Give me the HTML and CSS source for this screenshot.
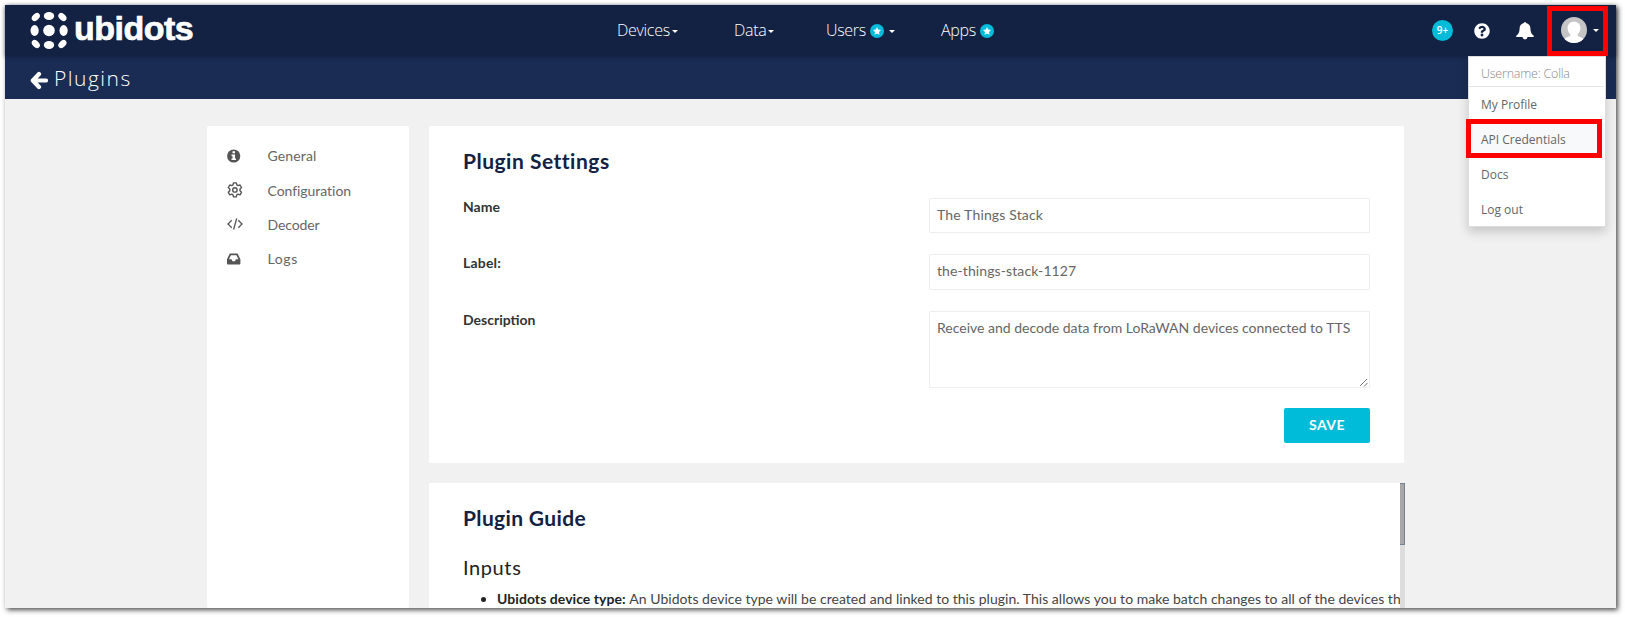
FILE: index.html
```html
<!DOCTYPE html>
<html lang="en">
<head>
<meta charset="utf-8">
<title>Plugins</title>
<link rel="stylesheet" href="styles.css">
</head>
<body>
<div class="window">
  <header class="topbar">
    <div class="logo">
      <svg class="logo-mark" viewBox="0 0 38 38" width="38" height="38" fill="#fff">
        <circle cx="19" cy="19.5" r="5.8"/>
        <ellipse cx="19" cy="5" rx="5.2" ry="4"/><ellipse cx="19" cy="34" rx="5.2" ry="4"/>
        <ellipse cx="4.6" cy="19.5" rx="4.1" ry="5.4"/><ellipse cx="33.600" cy="19.5" rx="4.1" ry="5.4"/>
        <ellipse cx="5.8" cy="6" rx="4.700" ry="3.200" transform="rotate(-45 5.8 6)"/>
        <ellipse cx="32.4" cy="6" rx="4.700" ry="3.200" transform="rotate(45 32.4 6)"/>
        <ellipse cx="5.8" cy="33" rx="4.700" ry="3.200" transform="rotate(45 5.8 33)"/>
        <ellipse cx="32.4" cy="33" rx="4.700" ry="3.200" transform="rotate(-45 32.4 33)"/>
      </svg>
      <span class="logo-text">ubidots</span>
    </div>
    <nav class="nav">
      <a class="nav-item devices"><span>Devices</span><i class="caret"></i></a>
      <a class="nav-item data"><span>Data</span><i class="caret"></i></a>
      <a class="nav-item users"><span>Users</span><svg class="star" viewBox="0 0 14 14"><circle cx="7" cy="7" r="7" fill="#00bcd9"/><path d="M7 3.1l1.2 2.5 2.8.4-2 1.9.5 2.8L7 9.4l-2.5 1.3.5-2.8-2-1.9 2.8-.4z" fill="#fff"/></svg><i class="caret"></i></a>
      <a class="nav-item apps"><span>Apps</span><svg class="star" viewBox="0 0 14 14"><circle cx="7" cy="7" r="7" fill="#00bcd9"/><path d="M7 3.1l1.2 2.5 2.8.4-2 1.9.5 2.8L7 9.4l-2.5 1.3.5-2.8-2-1.9 2.8-.4z" fill="#fff"/></svg></a>
    </nav>
    <div class="tools">
      <span class="count">9+</span>
      <svg class="help" viewBox="0 0 512 512"><path fill="#fff" d="M504 256c0 137-111 248-248 248S8 393 8 256C8 119.100 119 8 256 8s248 111.100 248 248zM262.700 90c-54.500 0-89.300 23-116.500 63.800-3.500 5.300-2.400 12.400 2.700 16.300l34.700 26.300c5.200 3.900 12.600 3 16.700-2.100 17.900-22.700 30.100-35.800 57.300-35.800 20.400 0 45.700 13.100 45.700 33 0 15-12.400 22.700-32.500 34C247.100 238.500 216 254.900 216 296v4c0 6.600 5.400 12 12 12h56c6.600 0 12-5.400 12-12v-1.300c0-28.500 83.200-29.600 83.200-106.700 0-58-60.200-102-116.500-102zM256 338c-25.400 0-46 20.600-46 46s20.600 46 46 46 46-20.600 46-46-20.600-46-46-46z"/></svg>
      <svg class="bell" viewBox="0 0 18 19" fill="#fff"><path d="M8 2a1 1 0 0 1 2 0c3 .5 4.400 2.800 4.400 5.500 0 4 1.300 5.800 3.300 7.200.4.400.2 1.300-.6 1.300H.9c-.8 0-1-.9-.6-1.300C2.300 13.300 3.600 11.500 3.600 7.500 3.600 4.800 5 2.500 8 2z"/><path d="M6.500 16h5a2.500 2.500 0 0 1-5 0z"/></svg>
      <div class="account">
        <svg class="avatar" viewBox="0 0 26 26"><circle cx="13" cy="13" r="13" fill="#c5c5c5"/><path d="M13 4.800c3.900 0 6.400 2.600 6.400 6.200 0 2.800-1.200 5-2.700 6.200v1.300c0 1.200 4.300 1.300 5.600 3.600A13 13 0 0 1 13 26a13 13 0 0 1-9.300-3.900c1.300-2.300 5.600-2.400 5.600-3.600v-1.300C7.800 16 6.600 13.800 6.600 11c0-3.600 2.500-6.200 6.400-6.200z" fill="#fff"/></svg>
        <i class="caret"></i>
        <div class="mark mark-account"></div>
        <div class="menu">
          <div class="menu-user">Username: Colla</div>
          <a class="menu-item profile">My Profile</a>
          <a class="menu-item active">API Credentials<span class="mark mark-api"></span></a>
          <a class="menu-item docs">Docs</a>
          <a class="menu-item logout">Log out</a>
        </div>
      </div>
    </div>
  </header>
  <div class="titlebar">
    <svg class="back" viewBox="0 0 18 19"><path d="M9 3L2.800 9.500 9 16M4 9.500h12" fill="none" stroke="#fff" stroke-width="4.200" stroke-linecap="round" stroke-linejoin="round"/></svg>
    <h1 class="page-title">Plugins</h1>
  </div>
  <main class="content">
    <aside class="sidebar">
      <a class="side-item"><svg class="side-icon" viewBox="0 0 16 16"><circle cx="6.700" cy="8" r="6.600" fill="#555"/><path d="M5.500 3.200h2.500v2.100H5.500zM4.500 6.500H8v4h1v1.500H4.500v-1.500h1V8h-1z" fill="#fff"/></svg><span class="t-general">General</span></a>
      <a class="side-item"><svg class="side-icon" viewBox="0 0 16 16" fill="none" stroke="#555" stroke-width="1.400"><path d="M6.500.9h2.800l.5 2 1.200.7 2-.6 1.500 2.500-1.500 1.500v1.800l1.500 1.500-1.500 2.500-2-.6-1.200.7-.5 2H6.500l-.5-2-1.200-.7-2 .6-1.500-2.500 1.500-1.500V7L1.300 5.500 2.800 3l2 .6L6 2.900z" stroke-linejoin="round"/><circle cx="7.900" cy="7.900" r="2.200"/></svg><span class="t-config">Configuration</span></a>
      <a class="side-item"><svg class="side-icon" viewBox="0 0 16 16" fill="none" stroke="#555" stroke-width="1.300"><path d="M4.700 4.200L1 8l3.700 3.800M11.300 4.200L15 8l-3.700 3.800M9.700 2.500L6.600 13.500"/></svg><span class="t-decoder">Decoder</span></a>
      <a class="side-item"><svg class="side-icon" viewBox="0 0 16 16"><path d="M2.800 2.500h7.800l2.800 5.800v4.300q0 1-1 1H1q-1 0-1-1V8.300zM3.900 4.300L2 8.300h2.500l1 2h2.400l1-2h2.500l-1.900-4z" fill="#555" fill-rule="evenodd"/></svg><span class="t-logs">Logs</span></a>
    </aside>
    <div class="column">
      <section class="panel settings">
        <h2 class="heading h-settings">Plugin Settings</h2>
        <div class="row"><label class="label l-name">Name</label><div class="field v-name">The Things Stack</div></div>
        <div class="row"><label class="label l-label">Label:</label><div class="field v-label">the-things-stack-1127</div></div>
        <div class="row"><label class="label l-desc">Description</label><div class="field area v-desc">Receive and decode data from LoRaWAN devices connected to TTS<svg class="grip" viewBox="0 0 9 9"><path d="M1 8L8 1M5 8.500L8.500 5" stroke="#777" fill="none"/></svg></div></div>
        <button class="save"><span>SAVE</span></button>
      </section>
      <section class="panel guide">
        <div class="guide-body">
          <h2 class="heading h-guide">Plugin Guide</h2>
          <h3 class="subheading">Inputs</h3>
          <ul class="inputs"><li><b>Ubidots device type:</b> <span class="desc">An Ubidots device type will be created and linked to this plugin. This allows you to make batch changes to all of the devices th</span></li></ul>
        </div>
        <div class="scroll"><div class="thumb"></div></div>
      </section>
    </div>
  </main>
</div>
</body>
</html>
```
FILE: styles.css
```css
* { box-sizing: border-box; }
body { margin: 0; background: #fff; width: 1625px; height: 617px; overflow: hidden; font-family: Lato, "Open Sans", sans-serif; }
h1, h2, h3, ul { margin: 0; padding: 0; }
.window { margin: 5px 0 0 5px; width: 1611px; height: 603px; background: #f1f1f1; box-shadow: 2px 2px 5px 0 rgba(0,0,0,.7); display: flex; flex-direction: column; }

.topbar { height: 51px; flex: none; background: #132143; display: flex; position: relative; z-index: 2; box-shadow: 0 1px 4px rgba(10,18,40,.5); font-family: "Open Sans", sans-serif; }
.logo { display: flex; width: 612px; padding: 6px 0 0 25px; }
.logo-mark { flex: none; }
.logo-text { font: bold 34px/38px "Liberation Sans", Arial, sans-serif; color: #fff; letter-spacing: -.5px; -webkit-text-stroke: .7px #fff; margin: -2px 0 0 6px; }
.nav { display: flex; width: 818px; }
.nav-item { display: flex; align-items: center; height: 49px; color: #fff; font-size: 16px; font-weight: 300; letter-spacing: -.3px; }
.devices { width: 117px; }
.data { width: 92px; }
.users { width: 115px; }
.caret { width: 0; height: 0; border: 3px solid transparent; border-top: 3px solid #fff; border-bottom: 0; margin: 4px 0 0 2px; }
.star { width: 14px; height: 14px; margin: 3px 0 0 4px; }
.users .caret { margin-left: 5px; }
.tools { display: flex; align-items: center; height: 51px; position: relative; }
.count { width: 21px; height: 21px; margin-left: -3px; border-radius: 50%; background: #00bcd9; color: #fff; font: 600 10px/20px "Open Sans", sans-serif; text-align: center; }
.help { width: 16px; height: 16px; margin-left: 21px; }
.bell { width: 18px; height: 19px; margin-left: 26px; }
.account { display: flex; align-items: center; margin-left: 27px; height: 51px; }
.avatar { width: 26px; height: 26px; margin-top: -2px; }
.account .caret { margin: 0 0 0 6px; }
.mark { position: absolute; border: 5px solid #f00; pointer-events: none; }
.mark-account { left: 112px; top: 1px; width: 61px; height: 50px; z-index: 3; }
.menu { position: absolute; left: 33px; top: 51px; width: 138px; height: 171px; background: #fff; border: 1px solid #ddd; box-shadow: 0 5px 10px rgba(0,0,0,.18); color: #666; font-size: 12px; }
.menu-user { height: 30px; line-height: 34px; padding-left: 12px; margin: 0 1px 0 0; color: #888; font-size: 12.500px; letter-spacing: -.22px; font-weight: 300; border-bottom: 1px solid #e5e5e5; }
.menu-item { display: block; height: 35px; line-height: 36px; padding-left: 12px; }
.menu-item.active { position: relative; background: #f7f9fb; }
.mark-api { left: -3px; top: -3px; width: 136px; height: 39px; }

.titlebar { height: 43px; flex: none; background: #1a2c54; display: flex; }
.back { width: 18px; height: 19px; margin: 15px 0 0 25px; }
.page-title { font: 300 21px/28px "Open Sans", sans-serif; color: #fff; letter-spacing: 1.500px; margin: 8px 0 0 6px; }

.content { display: flex; height: 509px; padding: 27px 0 0 202px; overflow: hidden; color: #666; font-size: 14px; }
.sidebar { width: 202px; flex: none; height: 482px; background: #fff; border-radius: 2px; padding-top: 13px; margin-right: 20px; }
.side-item { display: flex; align-items: center; height: 34.200px; padding-left: 20px; }
.side-item span { margin-top: -.3px; }
.side-icon { width: 16px; height: 16px; margin-right: 24.500px; }
.t-general { letter-spacing: .15px; }
.t-config { letter-spacing: -.05px; }
.t-decoder { letter-spacing: -.1px; }
.t-logs { letter-spacing: .6px; }
.column { width: 977px; }
.panel { width: 975px; background: #fff; padding: 0 34px; }
.settings { height: 337px; border-radius: 2px; padding-top: 19px; margin-bottom: 20px; }
.heading { font-size: 21px; line-height: 32px; font-weight: bold; color: #132143; }
.h-settings { letter-spacing: .5px; }
.h-guide { letter-spacing: .35px; }
.row { display: flex; justify-content: space-between; margin-bottom: 21px; }
.heading + .row { margin-top: 21px; }
.label { font-weight: bold; color: #333; line-height: 18px; }
.l-label { letter-spacing: .2px; }
.field { width: 441px; height: 35.400px; border: 1px solid #eee; padding-left: 7px; line-height: 32px; white-space: nowrap; position: relative; border-radius: 1px; }
.v-name { letter-spacing: .15px; }
.v-label { letter-spacing: .1px; }
.area { height: 77px; }
.grip { position: absolute; right: 1px; bottom: 0; width: 9px; height: 9px; }
.save { display: block; width: 86px; height: 35px; margin: -1px 0 0 auto; border: 0; border-radius: 2px; background: #00bcd9; color: #fff; font: bold 14px/32px Lato, sans-serif; letter-spacing: .4px; padding: 0 0 1px; }
.guide { width: 976px; height: 126px; padding-right: 0; display: flex; justify-content: space-between; overflow: hidden; }
.guide-body { width: 937px; padding-top: 19px; overflow: hidden; white-space: nowrap; }
.subheading { font-size: 20px; line-height: 28px; font-weight: 400; color: #222; letter-spacing: .6px; margin-top: 19px; }
.inputs { padding-left: 34px; line-height: 20px; color: #444; margin-top: 8px; }
.inputs li::marker { color: #222; }
.inputs b { color: #222; letter-spacing: .05px; }
.desc { letter-spacing: .025px; }
.scroll { width: 5px; background: #ddd; }
.thumb { height: 62px; background: #a8a8a8; border: solid #758090; border-width: 1px 1px 1px 0; }
```
